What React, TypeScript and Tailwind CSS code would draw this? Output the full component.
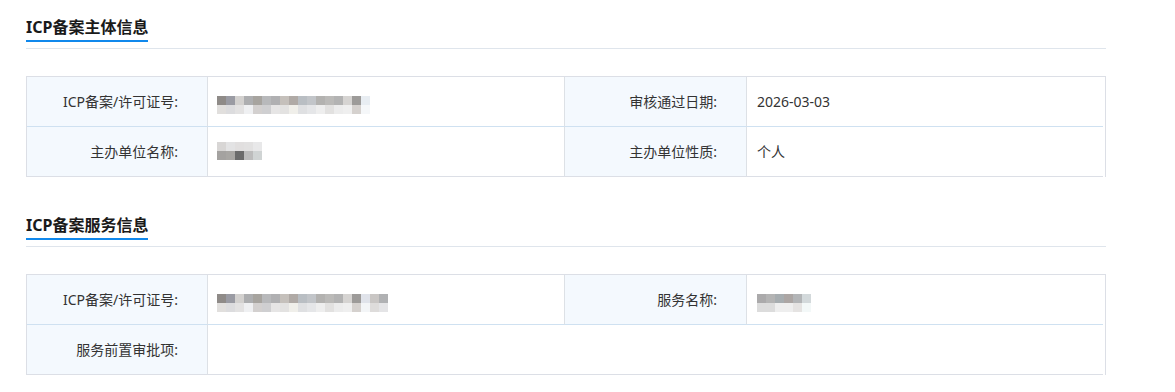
import React from "react";

// mosaic used to mask private values (two rows of 9px tiles)
type Mosaic = { top: string[]; bottom: string[] };

const recordNoMask: Mosaic = {
  top: ["#8f8b88", "#9a9ba3", "#d3d1cf", "#adaeb0", "#a7a49f", "#b8b9bb", "#b0b0b2", "#c5c0bb", "#b0aaa6", "#b9bec3", "#c2c5c9", "#b3b2b0", "#bbbab8", "#b3b3b3", "#d6d4d2", "#9d9b99", "#e8edf2"],
  bottom: ["#e1dfdd", "#dcdcde", "#e3e2e2", "#eff0f2", "#d3d0cf", "#cfcfd1", "#e6e5e5", "#e3e2e1", "#f0efea", "#dfe0e2", "#e5e6e8", "#eeeeee", "#e2e1e0", "#ececec", "#efefef", "#d5d1ce", "#f5f7f9"],
};

const ownerMask: Mosaic = {
  top: ["#d8d6d5", "#e3e3e4", "#e1dfdf", "#e2e1e1", "#e8e8e9"],
  bottom: ["#a4a2a0", "#a8a6a3", "#6b6b6b", "#bcbcbc", "#d0d4d4"],
};

const serviceNoMask: Mosaic = {
  top: ["#8f8b88", "#9a9ba3", "#d3d1cf", "#adaeb0", "#a7a49f", "#b8b9bb", "#b0b0b2", "#c5c0bb", "#b0aaa6", "#b9bec3", "#c2c5c9", "#b3b2b0", "#bbbab8", "#b3b3b3", "#d6d4d2", "#9d9b99", "#e0e3ea", "#c9c6c4", "#b0b1b3"],
  bottom: ["#e1dfdd", "#dcdcde", "#e3e2e2", "#eff0f2", "#d3d0cf", "#cfcfd1", "#e6e5e5", "#e3e2e1", "#f0efea", "#dfe0e2", "#e5e6e8", "#eeeeee", "#e2e1e0", "#ececec", "#efefef", "#d5d1ce", "#f3f5f7", "#dedcdb", "#e4e4e6"],
};

const serviceNameMask: Mosaic = {
  top: ["#abaaab", "#b4b4b4", "#a7adb0", "#aca6a4", "#b3b5b7", "#d3d9db"],
  bottom: ["#dcdcdc", "#dcdcdc", "#eeeeee", "#eeeeee", "#e5e3e2", "#f3f8f8"],
};

function Masked({ data, className = "" }: { data: Mosaic; className?: string }) {
  return (
    <div className={`flex flex-col ${className}`}>
      {[data.top, data.bottom].map((row, r) => (
        <div key={r} className="flex">
          {row.map((c, i) => (
            <span key={i} className="block w-[9px] h-[9px]" style={{ backgroundColor: c }} />
          ))}
        </div>
      ))}
    </div>
  );
}

function SectionHeader({ title }: { title: string }) {
  return (
    <div className="pt-[14px] border-b border-[#dfe5ec] pb-[6px]">
      <span className="inline-block text-[16px] font-bold leading-[26px] text-[#1a1a1a] border-b-[2px] border-[#1088ec]">
        {title}
      </span>
    </div>
  );
}

function Label({ children, last }: { children: React.ReactNode; last?: boolean }) {
  return (
    <div
      className={`h-[50px] flex items-center justify-end pr-[29px] bg-[#f4f9fe] border-r border-[#dde1e6] text-[14px] text-[#333] border-b ${
        last ? "border-b-[#dcdfe6]" : "border-b-[#cfe1f1]"
      }`}
    >
      {children}
    </div>
  );
}

function Value({
  children,
  last,
  end,
  className = "",
}: {
  children?: React.ReactNode;
  last?: boolean;
  end?: boolean;
  className?: string;
}) {
  return (
    <div
      className={`h-[50px] flex items-center pl-[10px] text-[14px] text-[#333] bg-white border-b ${
        end ? "" : "border-r border-[#dde1e6]"
      } ${last ? "border-b-[#dcdfe6]" : "border-b-[#cfe1f1]"} ${className}`}
    >
      {children}
    </div>
  );
}

export default function App() {
  return (
    <div className="min-h-screen bg-white font-['Noto_Sans','Noto_Sans_CJK_SC',sans-serif]">
      <div className="w-[1080px] ml-[26px]">
        {/* 主体信息 */}
        <section>
          <SectionHeader title="ICP备案主体信息" />
          <div className="mt-[27px] border-l border-r border-t border-[#dcdfe6] grid grid-cols-[181px_357px_182px_356px]">
            <Label>ICP备案/许可证号:</Label>
            <Value>
              <Masked data={recordNoMask} className="mt-[6px] ml-[-1px]" />
            </Value>
            <Label>审核通过日期:</Label>
            <Value end>2026-03-03</Value>

            <Label last>主办单位名称:</Label>
            <Value last>
              <Masked data={ownerMask} className="mt-[-2px] ml-[-1px]" />
            </Value>
            <Label last>主办单位性质:</Label>
            <Value last end>
              个人
            </Value>
          </div>
        </section>

        {/* 服务信息 */}
        <section className="mt-[21px]">
          <SectionHeader title="ICP备案服务信息" />
          <div className="mt-[27px] border-l border-r border-t border-[#dcdfe6] grid grid-cols-[181px_357px_182px_356px]">
            <Label>ICP备案/许可证号:</Label>
            <Value>
              <Masked data={serviceNoMask} className="mt-[6px] ml-[-1px]" />
            </Value>
            <Label>服务名称:</Label>
            <Value end>
              <Masked data={serviceNameMask} className="mt-[6px]" />
            </Value>

            <Label last>服务前置审批项:</Label>
            <Value last end className="col-span-3" />
          </div>
        </section>
      </div>
    </div>
  );
}
